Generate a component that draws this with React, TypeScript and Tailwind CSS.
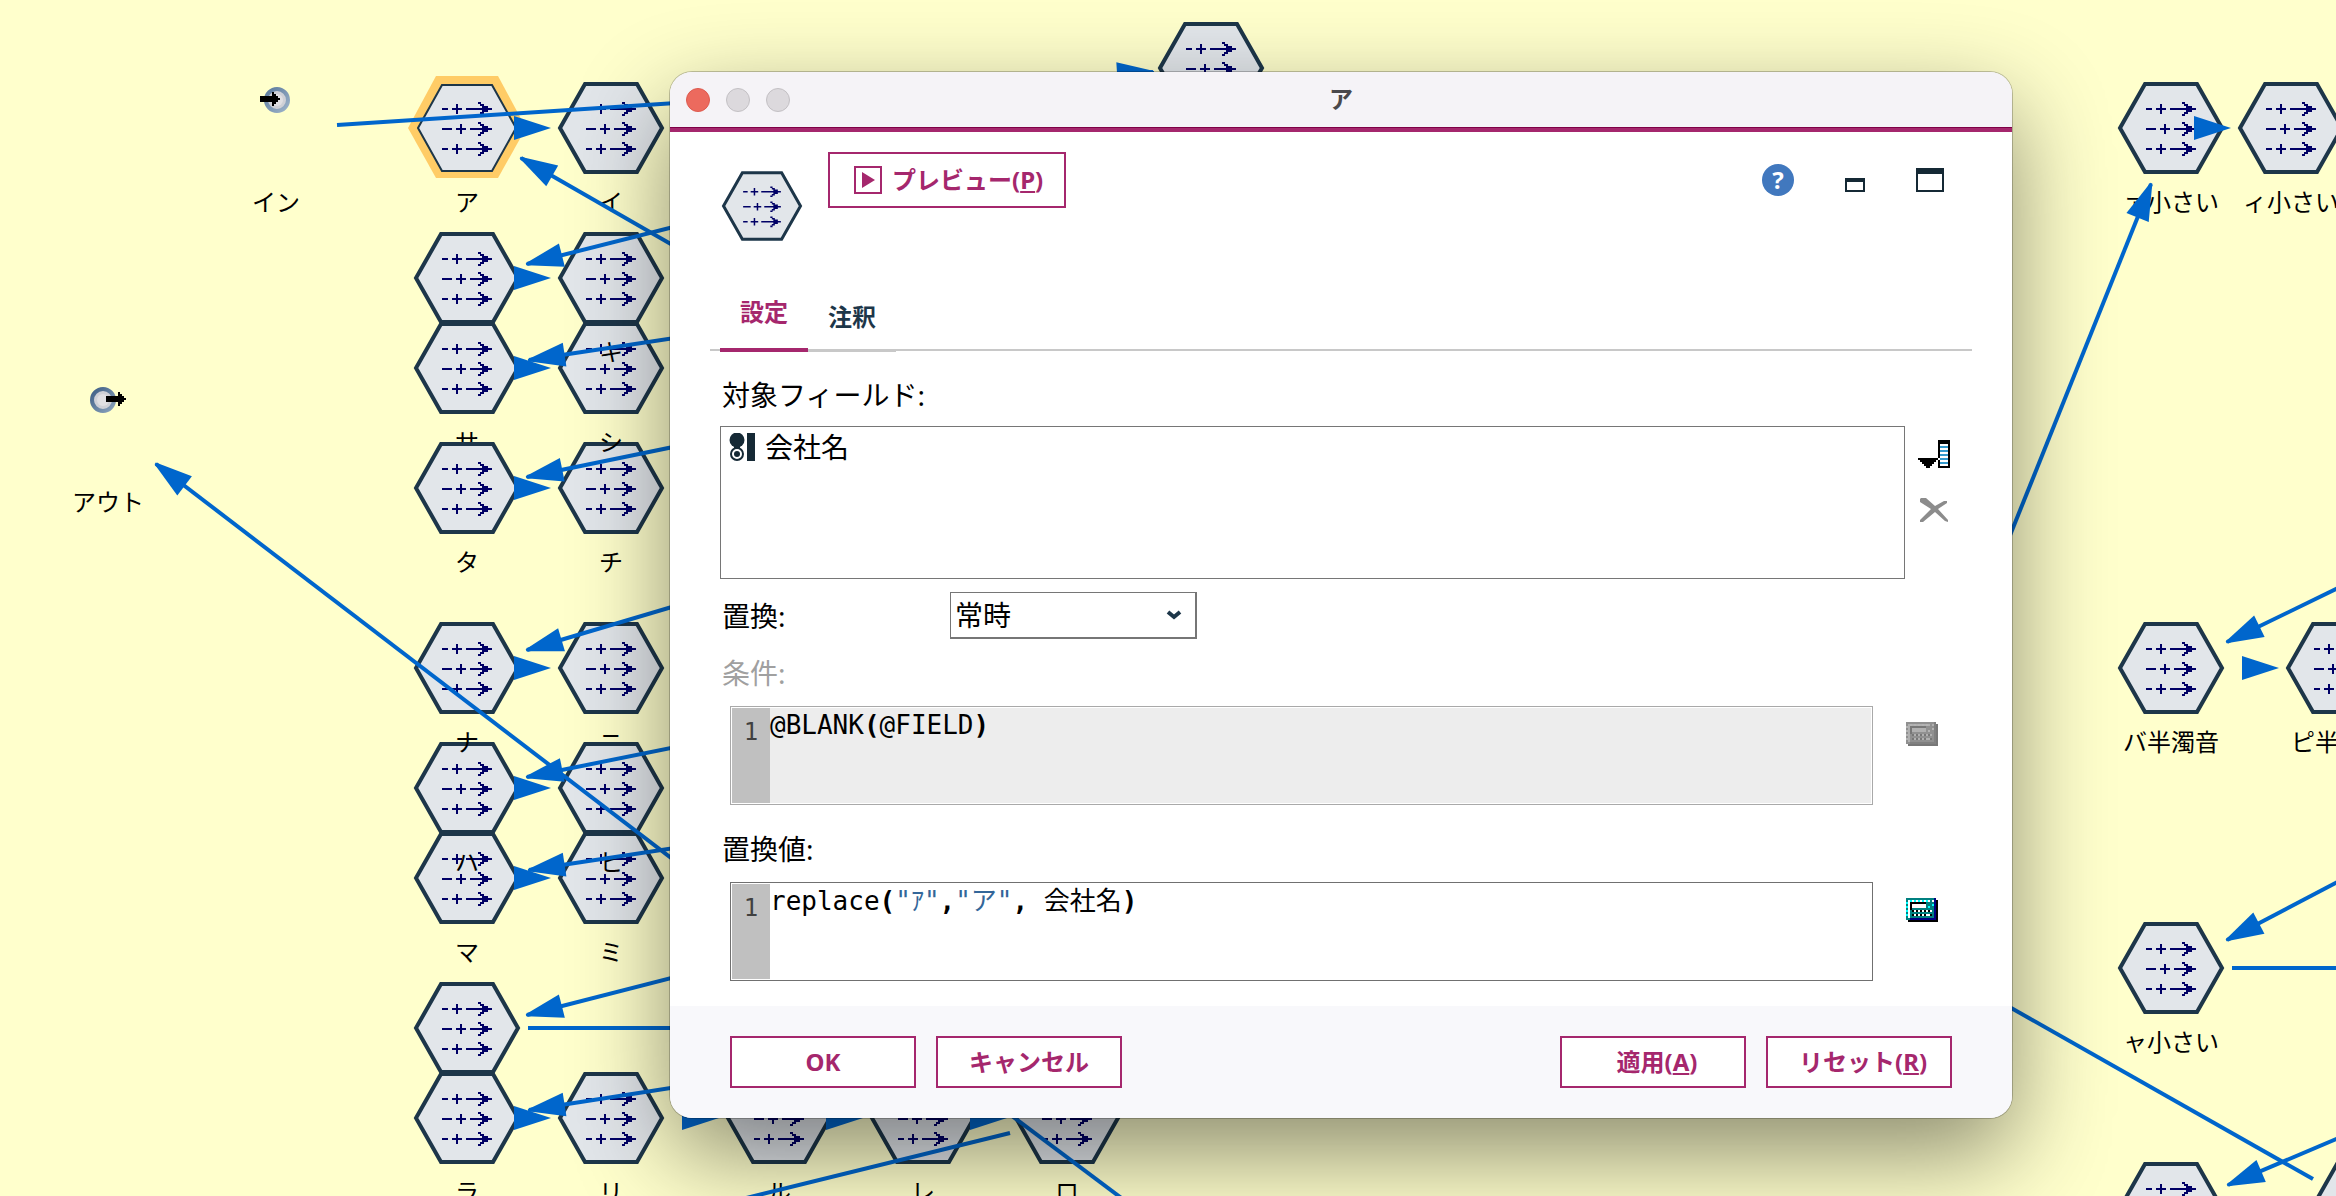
import React, { useState } from 'react';
import clsx from 'clsx';

type NodeKind = 'filler' | 'input' | 'output';

interface StreamNode {
  id: string;
  x: number;
  y: number;
  label?: string;
  kind?: NodeKind;
  selected?: boolean;
}

interface StreamEdge {
  from: [number, number];
  to: [number, number];
  arrow?: boolean;
}

// Later nodes are painted over earlier ones
const nodes: StreamNode[] = [
  { id: 'in', x: 276, y: 128, label: 'イン', kind: 'input' },
  { id: 'out', x: 108, y: 428, label: 'アウト', kind: 'output' },
  { id: 'o', x: 1211, y: 68 },
  { id: 'a', x: 467, y: 128, label: 'ア', selected: true },
  { id: 'i', x: 611, y: 128, label: 'イ' },
  { id: 'ka', x: 467, y: 278 },
  { id: 'sa', x: 467, y: 368, label: 'サ' },
  { id: 'ta', x: 467, y: 488, label: 'タ' },
  { id: 'chi', x: 611, y: 488, label: 'チ' },
  { id: 'shi', x: 611, y: 368, label: 'シ' },
  { id: 'ki', x: 611, y: 278, label: 'キ' },
  { id: 'ma', x: 467, y: 878, label: 'マ' },
  { id: 'ha', x: 467, y: 788, label: 'ハ' },
  { id: 'na', x: 467, y: 668, label: 'ナ' },
  { id: 'ni', x: 611, y: 668, label: 'ニ' },
  { id: 'mi', x: 611, y: 878, label: 'ミ' },
  { id: 'hi', x: 611, y: 788, label: 'ヒ' },
  { id: 'ya', x: 467, y: 1028 },
  { id: 'ra', x: 467, y: 1118, label: 'ラ' },
  { id: 'ri', x: 611, y: 1118, label: 'リ' },
  { id: 'ru', x: 779, y: 1118, label: 'ル' },
  { id: 're', x: 923, y: 1118, label: 'レ' },
  { id: 'ro', x: 1067, y: 1118, label: 'ロ' },
  { id: 'xa', x: 2171, y: 128, label: 'ァ小さい' },
  { id: 'xi', x: 2291, y: 128, label: 'ィ小さい' },
  { id: 'ba', x: 2171, y: 668, label: 'バ半濁音' },
  { id: 'pi', x: 2339, y: 668, label: 'ピ半濁音' },
  { id: 'xya', x: 2171, y: 968, label: 'ャ小さい' },
  { id: 'last1', x: 2171, y: 1208 },
  { id: 'last2', x: 2363, y: 1208 },
];

const edges: StreamEdge[] = [
  { from: [337, 125], to: [1153, 72], arrow: true },
  { from: [1000, 433], to: [521, 158], arrow: true },
  { from: [800, 195], to: [527, 264], arrow: true },
  { from: [800, 319], to: [529, 360], arrow: true },
  { from: [800, 421], to: [527, 477], arrow: true },
  { from: [900, 1033], to: [156, 464], arrow: true },
  { from: [800, 569], to: [527, 650], arrow: true },
  { from: [800, 722], to: [527, 777], arrow: true },
  { from: [800, 829], to: [529, 870], arrow: true },
  { from: [800, 945], to: [527, 1015], arrow: true },
  { from: [528, 1028], to: [800, 1028] },
  { from: [800, 1068], to: [529, 1110], arrow: true },
  { from: [1010, 1133], to: [730, 1202] },
  { from: [1000, 1107], to: [1140, 1212] },
  { from: [1970, 635], to: [2151, 184], arrow: true },
  { from: [2400, 558], to: [2227, 642], arrow: true },
  { from: [2400, 849], to: [2227, 940], arrow: true },
  { from: [2232, 968], to: [2400, 968] },
  { from: [1960, 979], to: [2313, 1179] },
  { from: [2400, 1112], to: [2228, 1185], arrow: true },
];

// Neighbours so close that only the arrow head shows
const shortArrows: [number, number][] = [
  [551, 128],
  [551, 278],
  [551, 368],
  [551, 488],
  [551, 668],
  [551, 788],
  [551, 878],
  [551, 1118],
  [719, 1118],
  [863, 1118],
  [1007, 1118],
  [2231, 128],
  [2279, 668],
];

const fieldName = '会社名';

const GlyphArrow: React.FC<{ y: number; middle?: boolean }> = ({ y, middle }) => (
  <g transform={`translate(0 ${y})`} fill="#000066">
    <path
      d={
        middle
          ? 'M28-1h10v2h-10zM42-1h10v2h-10zM46-5h2v10h-2zM56-1h14v2h-14z'
          : 'M28-1h6v2h-6zM38-1h10v2h-10zM42-5h2v10h-2zM52-1h18v2h-18z'
      }
    />
    <path d="M64-7h3v2h3v2h4v2h4v2h-4v2h-4v2h-3v2h-3v-2h2v-2h2v-6h-2v-2h-2z" />
  </g>
);

const HexIcon: React.FC<{ className?: string; selected?: boolean }> = ({ className, selected }) => (
  <svg viewBox="0 0 106 92" className={clsx('shrink-0 overflow-visible', className)} aria-hidden="true">
    {selected ? (
      <>
        <polygon points="-6,46 22,-6 84,-6 112,46 84,96 22,96" fill="#ffcc66" />
        <polygon points="4,46 28,3 78,3 102,46 78,89 28,89" fill="#e2e6ea" stroke="#1d3649" strokeWidth="2" />
      </>
    ) : (
      <polygon points="2,46 27,2 79,2 104,46 79,90 27,90" fill="#e2e6ea" stroke="#1d3649" strokeWidth="4" />
    )}
    <GlyphArrow y={27} />
    <GlyphArrow y={47} middle />
    <GlyphArrow y={67} />
  </svg>
);

const PortIcon: React.FC<{ output?: boolean }> = ({ output }) => (
  <svg viewBox="0 0 106 92" className="h-[92px] w-[106px] shrink-0" aria-hidden="true">
    <defs>
      <linearGradient id={output ? 'rim-out' : 'rim-in'} x1="0" y1="0" x2="1" y2="1">
        <stop offset="0" stopColor={output ? '#3f5f85' : '#5b7a9d'} />
        <stop offset="1" stopColor={output ? '#8ba3bd' : '#9db3c9'} />
      </linearGradient>
    </defs>
    <circle
      cx={output ? 48 : 54}
      cy="18"
      r="11"
      fill="#cfd0d6"
      stroke={output ? 'url(#rim-out)' : 'url(#rim-in)'}
      strokeWidth="4"
    />
    <circle cx={output ? 48 : 54} cy="18" r="6" fill="#e0dfe2" />
    <path transform={`translate(${output ? 51 : 37} 17)`} d="M0-3h12v-4h2v2h2v2h2v2h2v2h-2v2h-2v2h-2v2h-2v-4H0z" />
  </svg>
);

const FillerNode: React.FC<{ node: StreamNode }> = ({ node }) => (
  <div className="absolute flex w-[106px] flex-col items-center" style={{ left: node.x - 53, top: node.y - 46 }}>
    {node.kind ? (
      <PortIcon output={node.kind === 'output'} />
    ) : (
      <HexIcon className="h-[92px] w-[106px]" selected={node.selected} />
    )}
    {node.label && <span className="mt-[13px] text-2xl leading-[30px] whitespace-nowrap">{node.label}</span>}
  </div>
);

const Edge: React.FC<{ edge: StreamEdge }> = ({ edge }) => {
  const [x1, y1] = edge.from;
  const [x2, y2] = edge.to;
  const angle = (Math.atan2(y2 - y1, x2 - x1) * 180) / Math.PI;
  return (
    <g>
      <line x1={x1} y1={y1} x2={x2} y2={y2} stroke="#0066cc" strokeWidth="4" />
      {edge.arrow && (
        <polygon points="1,-1 1,1 -36,12 -36,-12" fill="#0066cc" transform={`translate(${x2} ${y2}) rotate(${angle})`} />
      )}
    </g>
  );
};

const FieldTypeIcon = () => (
  <svg viewBox="0 0 26 28" className="h-7 w-[26px]" aria-hidden="true">
    <circle cx="8" cy="7" r="7.5" fill="#152935" />
    <path d="M5 13h6v3H5z" fill="#152935" />
    <circle cx="8" cy="21" r="6" fill="#fff" stroke="#152935" strokeWidth="2" />
    <circle cx="8" cy="21" r="3" fill="#152935" />
    <path d="M18 0h8v28h-8z" fill="#152935" />
  </svg>
);

const FieldChooserIcon = () => (
  <svg viewBox="0 0 32 28" className="h-7 w-8" aria-hidden="true">
    <path d="M0 18h20v2h-2v2h-2v2h-2v2h-2v2H8v-2H6v-2H4v-2H2v-2H0z" />
    <path d="M20 0h12v28H20z" />
    <path d="M22 4h8v22h-8z" fill="#fff" />
    <path d="M22 6h8v2h-8zM22 10h8v2h-8zM22 14h8v2h-8zM22 18h8v2h-8zM22 22h8v2h-8z" fill="#3399cc" />
    <path d="M20 18h2v2h-2z" fill="#fff" />
  </svg>
);

const RemoveIcon = () => (
  <svg viewBox="0 0 28 24" className="h-6 w-7" aria-hidden="true">
    <path d="M1 0h5l9 8 9-5h3v2l-9 6 10 11v2l-3-1-10-9L3 24H0v-2l11-11L0 4V1z" fill="#8c8c8c" />
  </svg>
);

const CalculatorIcon: React.FC<{ disabled?: boolean }> = ({ disabled }) => {
  const face = disabled ? '#909090' : '#008080';
  const light = disabled ? '#b4b4b4' : '#00ffff';
  const white = disabled ? '#b0b0b0' : '#ffffff';
  const side = disabled ? '#808080' : '#000080';
  const dark = disabled ? '#777777' : '#000000';
  return (
    <svg viewBox="0 0 16 12" className="h-6 w-8" shapeRendering="crispEdges" aria-hidden="true">
      <path d="M1 1h15v11H1z" fill={dark} />
      <path d="M0 0h15v11H0z" fill={side} />
      <path d="M0 0h14v10H2v1H0z" fill={face} />
      <path d="M1 1h1v9H1zM3 1h1v1H3zM5 1h1v1H5zM7 1h1v1H7zM9 1h1v1H9zM11 1h1v1h-1zM13 1h1v1h-1z" fill={white} />
      <path d="M2 1h1v1H2zM4 1h1v1H4zM6 1h1v1H6zM8 1h1v1H8zM10 1h1v1h-1zM0 2h1v1H0zM0 4h1v1H0zM0 6h1v1H0zM0 8h1v1H0zM11 4h1v1h-1zM13 3h1v1h-1z" fill={light} />
      <path d="M2 2h8v3H3v1H2z" fill={dark} />
      <path d="M3 3h7v2H3z" fill={white} />
      <path d="M3 6h1v1H3zM5 6h1v1H5zM7 6h1v1H7zM9 6h1v1H9zM11 6h1v1h-1zM3 8h1v1H3zM5 8h1v1H5zM7 8h1v1H7zM9 8h1v1H9zM12 8h1v1h-1z" fill={dark} />
      <path d="M4 6h1v1H4zM6 6h1v1H6zM8 6h1v1H8zM10 6h1v1h-1zM12 6h1v1h-1zM4 8h1v1H4zM6 8h1v1H6zM8 8h1v1H8zM10 8h2v1h-2z" fill={white} />
    </svg>
  );
};

const highlight = (code: string) =>
  code.split(/("[^"]*"|[(),])/).map((part, i) => {
    if (part.startsWith('"')) {
      return (
        <span key={i} className="text-[#336699]">
          {part}
        </span>
      );
    }
    if (/^[(),]$/.test(part)) return <b key={i}>{part}</b>;
    return part;
  });

interface CodeEditorProps {
  id: string;
  value: string;
  disabled?: boolean;
  onChange: (value: string) => void;
}

const codeText = 'whitespace-pre-wrap text-[26px] leading-[34px]';

const CodeEditor: React.FC<CodeEditorProps> = ({ id, value, disabled, onChange }) => (
  <div
    className={clsx(
      "flex h-[99px] flex-1 border p-px font-['DejaVu_Sans_Mono','Noto_Sans_CJK_JP',monospace]",
      disabled ? 'border-[#a9a9a9]' : 'border-[#707070]'
    )}
  >
    <div className="w-[38px] bg-[#c0c0c0] pt-1 text-center text-2xl leading-[40px] text-[#404040]">1</div>
    <div className={clsx('relative flex-1', disabled ? 'bg-[#ededed]' : 'bg-white')}>
      <pre className={clsx('font-[inherit]', codeText)} aria-hidden="true">
        {highlight(value)}
      </pre>
      {/* Transparent input on top of the coloured copy */}
      <textarea
        id={id}
        value={value}
        disabled={disabled}
        spellCheck={false}
        onChange={(e) => onChange(e.target.value)}
        className={clsx('absolute inset-0 h-full w-full resize-none bg-transparent text-transparent caret-black outline-none', codeText)}
      />
    </div>
  </div>
);

const DialogButton: React.FC<{ children: React.ReactNode }> = ({ children }) => (
  <button className="h-[52px] w-[186px] border-2 border-[#a5276d] bg-white text-2xl font-bold text-[#a5276d]">
    {children}
  </button>
);

const FillerDialog: React.FC = () => {
  const [tab, setTab] = useState('設定');
  const [replaceMode, setReplaceMode] = useState('常時');
  const [condition, setCondition] = useState('@BLANK(@FIELD)');
  const [replacement, setReplacement] = useState('replace("ｱ","ア", 会社名)');

  return (
    <section
      role="dialog"
      aria-labelledby="dialog-title"
      className="absolute top-[72px] right-[324px] left-[670px] overflow-hidden rounded-[22px] bg-white shadow-[0_0_0_1px_rgba(0,0,0,0.22),0_36px_96px_rgba(0,0,0,0.46)]"
    >
      {/* Title bar */}
      <header className="grid h-[60px] grid-cols-3 items-center border-b-4 border-[#a5276d] bg-[#f5f3f7] px-4 shadow-[inset_0_-1px_0_#7f0047]">
        <div className="flex gap-4">
          <button aria-label="閉じる" className="size-6 rounded-full border border-[#dd5a4f] bg-[#ec6a5e]" />
          <button aria-label="しまう" className="size-6 rounded-full border border-[#c3c0c4] bg-[#dcd9dd]" />
          <button aria-label="拡大" className="size-6 rounded-full border border-[#c3c0c4] bg-[#dcd9dd]" />
        </div>
        <h1 id="dialog-title" className="pb-0.5 text-center text-2xl font-bold text-[#4a484b]">
          ア
        </h1>
      </header>

      {/* Toolbar */}
      <div className="flex h-[156px] items-start justify-between pt-5 pr-[68px] pl-[52px]">
        <div className="flex items-start gap-[26px]">
          <HexIcon className="mt-[18px] h-[72px] w-20" />
          <button className="flex h-14 w-[238px] items-center gap-2.5 border-2 border-[#a5276d] pl-6 text-2xl font-bold whitespace-nowrap text-[#a5276d]">
            <svg viewBox="0 0 28 28" className="size-7" aria-hidden="true">
              <path d="M1 1h26v26H1z" fill="none" stroke="#a5276d" strokeWidth="2" />
              <path d="M8 6l13 8-13 8z" fill="#a5276d" />
            </svg>
            <span>
              プレビュー(<u className="underline-offset-2">P</u>)
            </span>
          </button>
        </div>
        <div className="flex h-14 items-center gap-[51px]">
          <button aria-label="ヘルプ" className="size-8 rounded-full bg-[#4178be] text-2xl leading-8 font-bold text-white">
            ?
          </button>
          <button aria-label="最小化" className="mt-2.5 h-3.5 w-5 border-2 border-t-4 border-[#152935]" />
          <button aria-label="最大化" className="h-6 w-7 border-2 border-t-6 border-[#152935]" />
        </div>
      </div>

      {/* Tabs */}
      <div role="tablist" className="mx-10 flex h-[63px] border-b-2 border-[#c8c8c8] pl-2.5">
        {['設定', '注釈'].map((name) => (
          <button
            key={name}
            role="tab"
            aria-selected={tab === name}
            onClick={() => setTab(name)}
            className={clsx(
              '-mb-[3px] w-[88px] text-2xl font-bold',
              tab === name ? 'border-b-4 border-[#a5276d] pb-3 text-[#a5276d]' : 'border-b-2 border-[#c8c8c8] pb-1 text-[#1d3649]'
            )}
          >
            {name}
          </button>
        ))}
      </div>

      {/* Settings */}
      <div className="pt-6 pb-[25px] pl-[50px] text-[28px] leading-10">
        <div id="fields-label" className="pl-0.5">
          対象フィールド:
        </div>
        <div className="mt-[11px] flex">
          <ul role="listbox" aria-labelledby="fields-label" className="h-[153px] flex-1 border border-[#767676]">
            <li role="option" aria-selected="false" className="flex items-center gap-2.5 pl-2">
              <FieldTypeIcon />
              {fieldName}
            </li>
          </ul>
          <div className="flex w-[107px] flex-col items-center gap-[30px] pt-3.5 pr-[62px] pl-[13px]">
            <button aria-label="フィールドの選択">
              <FieldChooserIcon />
            </button>
            <button aria-label="フィールドの削除" disabled>
              <RemoveIcon />
            </button>
          </div>
        </div>

        <div className="mt-[13px] flex items-center">
          <label htmlFor="replace-mode" className="w-[230px] pl-0.5">
            置換:
          </label>
          <div className="relative">
            <select
              id="replace-mode"
              value={replaceMode}
              onChange={(e) => setReplaceMode(e.target.value)}
              className="block h-[47px] w-[247px] appearance-none border border-r-2 border-b-2 border-[#767676] bg-white pl-1"
            >
              <option>常時</option>
            </select>
            <svg viewBox="0 0 16 10" className="pointer-events-none absolute top-[18px] right-[15px] h-2.5 w-4" aria-hidden="true">
              <path d="M2 2l6 5 6-5" fill="none" stroke="#1d3649" strokeWidth="4" />
            </svg>
          </div>
        </div>

        <label htmlFor="condition" className="mt-3.5 block pl-0.5 text-[#a0a0a0]">
          条件:
        </label>
        <div className="mt-[13px] flex pl-2.5">
          <CodeEditor id="condition" value={condition} disabled={replaceMode === '常時'} onChange={setCondition} />
          <div className="flex w-[139px] items-start pt-4 pl-[33px]">
            <button aria-label="条件の式ビルダー" disabled>
              <CalculatorIcon disabled />
            </button>
          </div>
        </div>

        <label htmlFor="replacement" className="mt-6 block pl-0.5">
          置換値:
        </label>
        <div className="mt-[13px] flex pl-2.5">
          <CodeEditor id="replacement" value={replacement} onChange={setReplacement} />
          <div className="flex w-[139px] items-start pt-4 pl-[33px]">
            <button aria-label="置換値の式ビルダー">
              <CalculatorIcon />
            </button>
          </div>
        </div>
      </div>

      {/* Footer */}
      <footer className="flex h-28 items-center justify-between bg-[#f8f8fb] px-[60px]">
        <div className="flex gap-5">
          <DialogButton>OK</DialogButton>
          <DialogButton>キャンセル</DialogButton>
        </div>
        <div className="flex gap-5">
          <DialogButton>
            <span className="pl-2">
              適用(<u className="underline-offset-2">A</u>)
            </span>
          </DialogButton>
          <DialogButton>
            <span className="pl-2">
              リセット(<u className="underline-offset-2">R</u>)
            </span>
          </DialogButton>
        </div>
      </footer>
    </section>
  );
};

const App: React.FC = () => {
  return (
    <main
      lang="ja"
      className="relative h-screen overflow-hidden bg-[#ffffcc] font-['Noto_Sans','Noto_Sans_CJK_JP',sans-serif] text-black"
    >
      {/* Stream canvas */}
      {nodes.map((node) => (
        <FillerNode key={node.id} node={node} />
      ))}
      <svg className="pointer-events-none absolute inset-0 h-full w-full" aria-hidden="true">
        {edges.map((edge, index) => (
          <Edge key={index} edge={edge} />
        ))}
        {shortArrows.map(([x, y]) => (
          <polygon key={`${x}-${y}`} points="0,0 -37,12 -37,-12" fill="#0066cc" transform={`translate(${x} ${y})`} />
        ))}
      </svg>

      <FillerDialog />
    </main>
  );
};

export default App;
